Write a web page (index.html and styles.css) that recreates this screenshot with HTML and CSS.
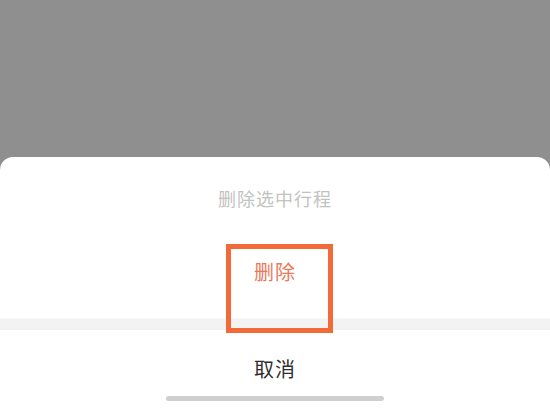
FILE: index.html
```html
<!DOCTYPE html>
<html lang="zh">
<head>
<meta charset="utf-8">
<link rel="stylesheet" href="styles.css">
</head>
<body>
<div class="screen">
  <div class="backdrop"></div>
  <div class="sheet">
    <div class="title">删除选中行程</div>
    <div class="action">
      <span class="action-text">删除</span>
      <div class="highlight"></div>
    </div>
    <div class="gap"></div>
    <div class="cancel">取消</div>
    <div class="home-bar"></div>
  </div>
</div>
</body>
</html>
```
FILE: styles.css
```css
html, body {
  margin: 0;
  padding: 0;
  background: #8f8f8f;
}
.screen {
  width: 550px;
  height: 412px;
  display: flex;
  flex-direction: column;
  overflow: hidden;
  font-family: "Noto Sans CJK SC", "Noto Sans", sans-serif;
}
.backdrop {
  height: 157px;
  flex: none;
  background: #8f8f8f;
}
.sheet {
  flex: 1;
  background: #ffffff;
  border-radius: 13px 13px 0 0;
  display: flex;
  flex-direction: column;
}
.title {
  height: 82px;
  line-height: 82px;
  text-align: center;
  font-size: 18px;
  letter-spacing: 1px;
  color: #c2c2c2;
  flex: none;
}
.action {
  position: relative;
  height: 80px;
  box-sizing: border-box;
  padding-bottom: 14px;
  display: flex;
  align-items: center;
  justify-content: center;
  border-bottom: 1px solid #f8f8f8;
  flex: none;
}
.action-text {
  font-size: 20px;
  color: #e9795a;
  letter-spacing: 1px;
}
.highlight {
  position: absolute;
  left: 226px;
  top: 5px;
  width: 107px;
  height: 89px;
  box-sizing: border-box;
  border: 5px solid #f26a38;
  z-index: 2;
}
.gap {
  height: 11px;
  background: #f3f3f3;
  flex: none;
}
.cancel {
  height: 60px;
  box-sizing: border-box;
  padding-top: 16px;
  display: flex;
  align-items: center;
  justify-content: center;
  font-size: 20px;
  color: #2e2e2e;
  letter-spacing: 1px;
  flex: none;
}
.home-bar {
  margin: 6px auto 0;
  width: 218px;
  height: 5px;
  border-radius: 3px;
  background: #cfcfcf;
  flex: none;
}
```
